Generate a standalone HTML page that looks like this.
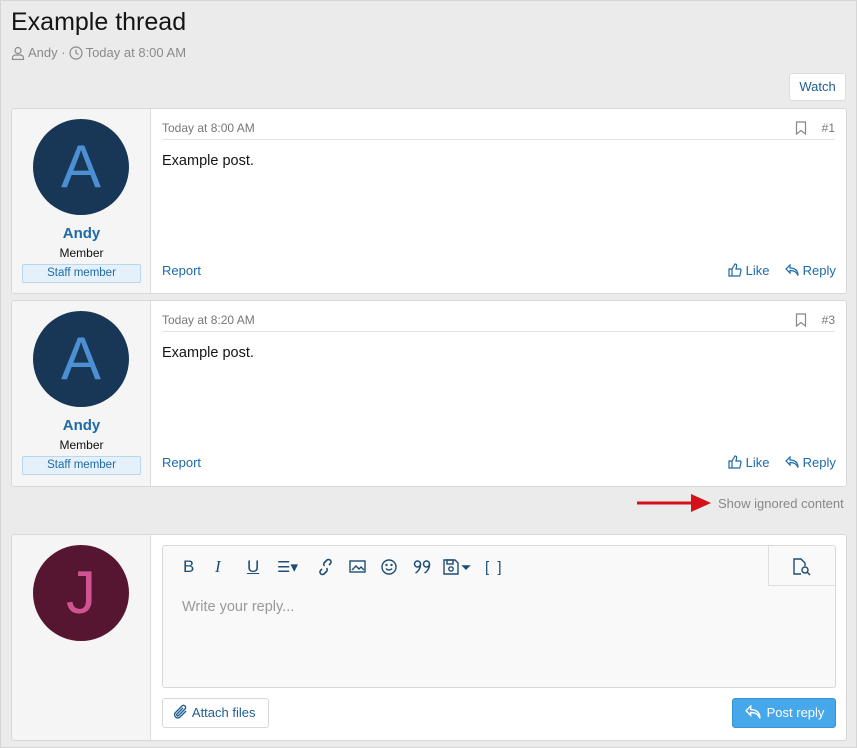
<!DOCTYPE html>
<html><head><meta charset="utf-8"><style>
*{box-sizing:border-box;margin:0;padding:0}
body{width:857px;height:748px;background:#ebebeb;font-family:"Liberation Sans",Arial,sans-serif;position:relative;overflow:hidden;box-shadow:inset 0 0 0 1px #d6d6d6}
.a{position:absolute}
.box{position:absolute;left:11px;width:836px;background:#fff;border:1px solid #d8d8d8;border-radius:3px;overflow:hidden}
.side{position:absolute;left:0;top:0;bottom:0;width:139px;background:#f5f5f5;border-right:1px solid #dcdcdc}
.av{position:absolute;left:21px;top:10px;width:96px;height:96px;border-radius:50%;background:#183757;color:#4d8fd3;font-size:60px;text-align:center;line-height:96px}
.name{position:absolute;left:0;width:139px;text-align:center;font-weight:bold;font-size:15px;color:#1d6aa8}
.mem{position:absolute;left:0;width:139px;text-align:center;font-size:12px;color:#111}
.staff{position:absolute;left:10px;width:119px;height:19px;border:1px solid #b8d6ee;background:#e4f1fb;color:#1d6aa8;font-size:11.5px;text-align:center;line-height:17px;border-radius:2px}
.date{position:absolute;left:150px;top:12px;font-size:12px;color:#777}
.hr{position:absolute;left:150px;right:11px;top:30px;height:1px;background:#e4e4e4}
.num{position:absolute;right:11px;top:12px;font-size:12px;color:#777}
.txt{position:absolute;left:150px;top:44px;font-size:14.5px;color:#141414}
.rep{position:absolute;left:150px;font-size:13px;color:#1d6aa8}
.act{position:absolute;font-size:13px;color:#1d6aa8}
</style></head><body>
<div class="a" style="left:11px;top:8px;font-size:25px;color:#141414">Example thread</div>
<div class="a" style="left:11px;top:45px;font-size:13px;color:#8a8a8a;display:flex;align-items:center;gap:3px">
<svg width="14" height="14" viewBox="0 0 14 14" fill="none" stroke="#8a8a8a" stroke-width="1.2"><circle cx="7" cy="4.5" r="3"/><path d="M1.5 13.5v-1.5a3 3 0 0 1 3-3h5a3 3 0 0 1 3 3v1.5z"/></svg>
<span>Andy ·</span>
<svg width="14" height="14" viewBox="0 0 14 14" fill="none" stroke="#8a8a8a" stroke-width="1.2"><circle cx="7" cy="7" r="6"/><path d="M7 3.5V7l2.5 1.5"/></svg>
<span>Today at 8:00 AM</span></div>
<div class="a" style="left:789px;top:73px;width:57px;height:28px;background:#fff;border:1px solid #dcdcdc;border-radius:3px;font-size:13px;color:#1d5e91;text-align:center;line-height:26px">Watch</div>

<div class="box" style="top:108px;height:186px">
<div class="side"><div class="av">A</div><div class="name" style="top:116px">Andy</div><div class="mem" style="top:137px">Member</div><div class="staff" style="top:155px">Staff member</div></div>
<div class="date">Today at 8:00 AM</div>
<svg class="a" style="left:783px;top:12px" width="12" height="14" viewBox="0 0 12 14" fill="none" stroke="#888" stroke-width="1.2"><path d="M1.5 1h9v12l-4.5-3.5L1.5 13z"/></svg>
<div class="num">#1</div><div class="hr"></div>
<div class="txt">Example post.</div>
<div class="rep" style="top:154px">Report</div>
<div class="act" style="left:716px;top:154px"><svg width="14" height="14" viewBox="0 0 14 14" fill="none" stroke="#1d6aa8" stroke-width="1.2" style="vertical-align:-2px"><path d="M1 6h3v7H1zM4 6l3-5c1.5 0 2 1 1.5 2.5L8 6h4a1 1 0 0 1 1 1.2l-1 4.8a1 1 0 0 1-1 1H4"/></svg> Like</div>
<div class="act" style="left:773px;top:154px"><svg width="14" height="13" viewBox="0 0 14 13" fill="none" stroke="#1d6aa8" stroke-width="1.2" style="vertical-align:-2px"><path d="M5 1L1 5l4 4V6.5c4 0 6 1 8 5c0-5-3-7.5-8-7.5V1z"/></svg> Reply</div>
</div>

<div class="box" style="top:300px;height:187px">
<div class="side"><div class="av">A</div><div class="name" style="top:116px">Andy</div><div class="mem" style="top:137px">Member</div><div class="staff" style="top:155px">Staff member</div></div>
<div class="date">Today at 8:20 AM</div>
<svg class="a" style="left:783px;top:12px" width="12" height="14" viewBox="0 0 12 14" fill="none" stroke="#888" stroke-width="1.2"><path d="M1.5 1h9v12l-4.5-3.5L1.5 13z"/></svg>
<div class="num">#3</div><div class="hr"></div>
<div class="txt">Example post.</div>
<div class="rep" style="top:154px">Report</div>
<div class="act" style="left:716px;top:154px"><svg width="14" height="14" viewBox="0 0 14 14" fill="none" stroke="#1d6aa8" stroke-width="1.2" style="vertical-align:-2px"><path d="M1 6h3v7H1zM4 6l3-5c1.5 0 2 1 1.5 2.5L8 6h4a1 1 0 0 1 1 1.2l-1 4.8a1 1 0 0 1-1 1H4"/></svg> Like</div>
<div class="act" style="left:773px;top:154px"><svg width="14" height="13" viewBox="0 0 14 13" fill="none" stroke="#1d6aa8" stroke-width="1.2" style="vertical-align:-2px"><path d="M5 1L1 5l4 4V6.5c4 0 6 1 8 5c0-5-3-7.5-8-7.5V1z"/></svg> Reply</div>
</div>

<svg class="a" style="left:637px;top:493px" width="76" height="20"><path d="M0 10h58" stroke="#d4111b" stroke-width="3"/><path d="M54 1l20 9-20 9z" fill="#d4111b"/></svg>
<div class="a" style="left:718px;top:496px;font-size:13px;color:#888">Show ignored content</div>

<div class="box" style="top:534px;height:207px">
<div class="side"><div class="av" style="background:#561631;color:#d0548f">J</div></div>
<div class="a" style="left:150px;top:10px;width:674px;height:143px;border:1px solid #d8d8d8;border-radius:3px;background:#f9f9f9">
<div class="a" style="left:605px;top:0;width:68px;height:40px;border-left:1px solid #ddd;border-bottom:1px solid #ddd"><svg class="a" style="left:23px;top:12px" width="20" height="18" viewBox="0 0 20 18" fill="none" stroke="#1e4d73" stroke-width="1.4"><path d="M9 16H2V1h7l4 4v3"/><circle cx="13" cy="12" r="3"/><path d="M15 14l3 3"/></svg></div>
<div class="a" style="left:20px;top:11px;font-size:17px;color:#1e4d73;display:flex;align-items:center;height:20px">
<span style="width:32px">B</span><span style="width:32px;font-family:'Liberation Serif',serif;font-style:italic">I</span><span style="width:30px;text-decoration:underline">U</span>
<span style="width:40px;font-size:15px">☰▾</span>
<svg width="32" height="18" viewBox="0 0 32 18" fill="none" stroke="#1e4d73" stroke-width="1.6"><path d="M5 11l-1.5 1.5a2.5 2.5 0 0 0 3.5 3.5L9.5 13.5a2.5 2.5 0 0 0 0-3.5M12 7l1.5-1.5a2.5 2.5 0 0 0-3.5-3.5L7.5 4.5a2.5 2.5 0 0 0 0 3.5"/></svg>
<svg width="32" height="18" viewBox="0 0 32 18" fill="none" stroke="#1e4d73" stroke-width="1.4"><rect x="1" y="3" width="15" height="11"/><path d="M3 12l4-4 3 3 2-2 3 3" /></svg>
<svg width="32" height="18" viewBox="0 0 32 18" fill="none" stroke="#1e4d73" stroke-width="1.4"><circle cx="8" cy="9" r="7"/><path d="M5 10.5c1.5 2 4.5 2 6 0"/><circle cx="5.5" cy="7" r=".5"/><circle cx="10.5" cy="7" r=".5"/></svg>
<svg width="30" height="18" viewBox="0 0 30 18" fill="none" stroke="#1e4d73" stroke-width="1.5"><circle cx="4.5" cy="6" r="3"/><path d="M7.5 6c0 5-3 8-5 9"/><circle cx="13.5" cy="6" r="3"/><path d="M16.5 6c0 5-3 8-5 9"/></svg>
<svg width="42" height="18" viewBox="0 0 42 18" fill="none" stroke="#1e4d73" stroke-width="1.4"><path d="M1 2h11l3 3v11H1z"/><rect x="4" y="2" width="6" height="4"/><circle cx="8" cy="11" r="2.2"/><path d="M20 8h6l-3 3z" fill="#1e4d73"/></svg>
<span style="font-size:15px;letter-spacing:2px">[ ]</span>
</div>
<div class="a" style="left:19px;top:53px;font-size:14.5px;color:#999">Write your reply...</div>
</div>
<div class="a" style="left:150px;top:163px;width:107px;height:30px;border:1px solid #d8d8d8;border-radius:3px;background:#fff;font-size:13px;color:#1d5e91;line-height:28px;padding-left:10px"><svg width="16" height="16" viewBox="0 0 16 16" fill="none" stroke="#1d5e91" stroke-width="1.4" style="vertical-align:-3px"><path d="M13 7l-6 6a3 3 0 0 1-4.5-4.5L9 2a2 2 0 0 1 3 3L5.5 11.5a1 1 0 0 1-1.5-1.5L10 4"/></svg> Attach files</div>
<div class="a" style="left:720px;top:163px;width:104px;height:30px;border-radius:3px;background:#47a7eb;border:1px solid #3a93d3;color:#fff;font-size:13px;line-height:28px;padding-left:10px"><svg width="20" height="15" viewBox="0 0 14 13" fill="none" stroke="#fff" stroke-width="1.2" style="vertical-align:-3px"><path d="M5 1L1 5l4 4V6.5c4 0 6 1 8 5c0-5-3-7.5-8-7.5V1z"/></svg> Post reply</div>
</div>
</body></html>
